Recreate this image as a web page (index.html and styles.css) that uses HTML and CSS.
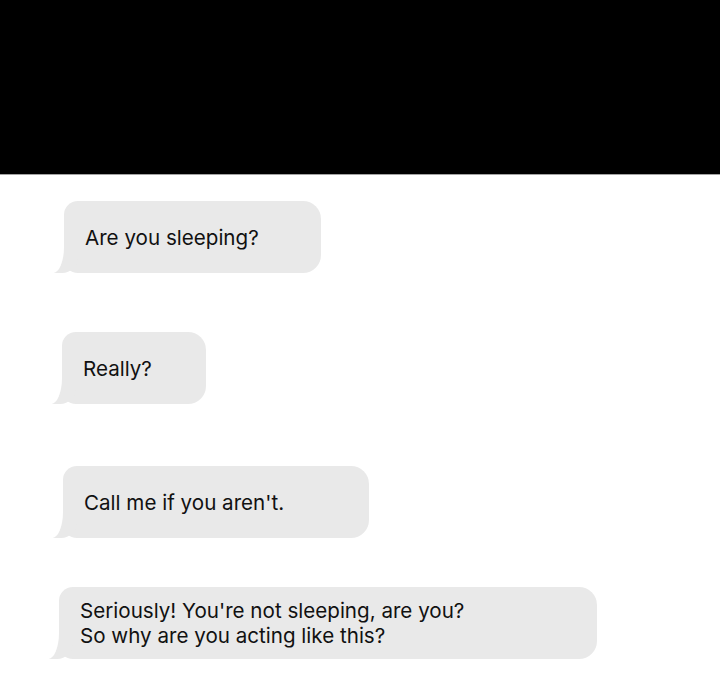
FILE: index.html
```html
<!DOCTYPE html>
<html lang="en">
<head>
    <meta charset="UTF-8">
    <meta name="viewport" content="width=device-width, initial-scale=1.0">
    <title>Messages</title>
    <link rel="stylesheet" href="styles.css">
</head>
<body>
    <div class="top-bar"></div>

    <div class="chat">
        <div class="bubble bubble-sleeping">Are you sleeping?</div>
        <div class="bubble bubble-really">Really?</div>
        <div class="bubble bubble-call">Call me if you aren't.</div>
        <div class="bubble bubble-seriously">Seriously! You're not sleeping, are you?<br>So why are you acting like this?</div>
    </div>
</body>
</html>
```

FILE: styles.css
```css
body {
    margin: 0;
    font-family: Inter, "Noto Sans", sans-serif;
    background-color: #fff;
    color: #111;
}
.top-bar {
    height: 174px;
    background: #000;
    border-bottom: 1px solid #a3a3a3;
}
.chat {
    display: flex;
    flex-direction: column;
    align-items: flex-start;
    padding-top: 26px;
}
.bubble {
    position: relative;
    box-sizing: border-box;
    min-height: 72px;
    display: flex;
    align-items: center;
    padding: 11px 20px 11px 21px;
    background: #e9e9e9;
    border-radius: 14px 18px 18px 14px;
    font-size: 20.6px;
    line-height: 25px;
}
/* tail at the bottom left */
.bubble::before {
    content: "";
    position: absolute;
    bottom: 0;
    left: -10px;
    width: 24px;
    height: 30px;
    background: #e9e9e9;
    border-bottom-right-radius: 16px;
}
.bubble::after {
    content: "";
    position: absolute;
    bottom: 0;
    left: -34px;
    width: 34px;
    height: 30px;
    background: #fff;
    border-bottom-right-radius: 11px 26px;
}
.bubble-sleeping {
    margin-left: 64px;
    width: 257px;
}
.bubble-really {
    margin-top: 59px;
    margin-left: 62px;
    width: 144px;
}
.bubble-call {
    margin-top: 62px;
    margin-left: 63px;
    width: 306px;
}
.bubble-seriously {
    margin-top: 49px;
    margin-left: 59px;
    width: 538px;
}
```
